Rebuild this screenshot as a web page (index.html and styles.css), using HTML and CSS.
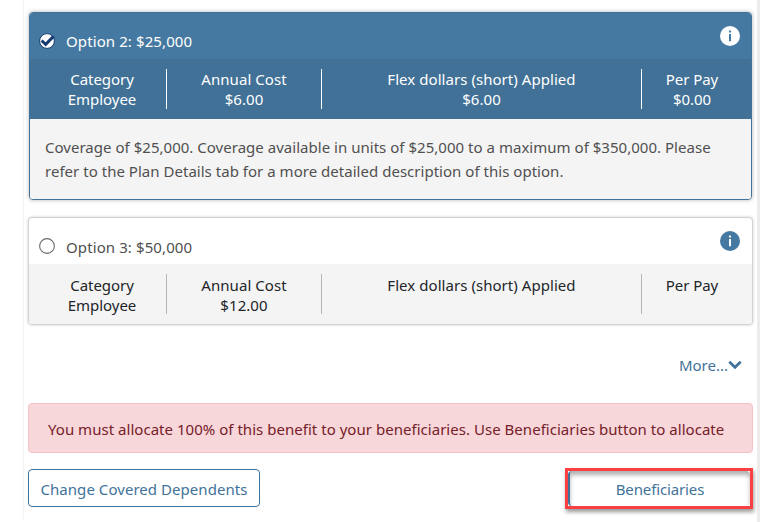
FILE: index.html
```html
<!DOCTYPE html>
<html lang="en">
<head>
<meta charset="utf-8">
<title>Benefit options</title>
<link rel="stylesheet" href="styles.css">
</head>
<body>
<main class="panel">
  <section class="card selected">
    <header class="card-head">
      <svg class="radio" viewBox="0 0 16 16"><circle cx="8" cy="8" r="7.4" fill="#fff" stroke="#173a70" stroke-width="1"/><path d="M2.6 7.5 6.7 11.4 14.6 3.2" fill="none" stroke="#173a70" stroke-width="3"/></svg>
      <span class="title">Option 2: $25,000</span>
      <svg class="info" viewBox="0 0 20 20"><circle cx="10" cy="10" r="10" fill="#fff"/><path d="M9 4.5h2v2H9zM9 8h2v7.3H9z" fill="#4679a1"/></svg>
    </header>
    <div class="costs">
      <div class="cell category"><span>Category</span><span>Employee</span></div>
      <div class="cell annual"><span>Annual Cost</span><span>$6.00</span></div>
      <div class="cell flex"><span>Flex dollars (short) Applied</span><span>$6.00</span></div>
      <div class="cell pay"><span>Per Pay</span><span>$0.00</span></div>
    </div>
    <p class="details">Coverage of $25,000. Coverage available in units of $25,000 to a maximum of $350,000. Please<br>refer to the Plan Details tab for a more detailed description of this option.</p>
  </section>

  <section class="card">
    <header class="card-head">
      <svg class="radio" viewBox="0 0 16 16"><circle cx="8" cy="8" r="7.4" fill="#fff" stroke="#666b70" stroke-width="1.1"/></svg>
      <span class="title">Option 3: $50,000</span>
      <svg class="info" viewBox="0 0 20 20"><circle cx="10" cy="10" r="10" fill="#4679a1"/><path d="M9 4.5h2v2H9zM9 8h2v7.3H9z" fill="#fff"/></svg>
    </header>
    <div class="costs">
      <div class="cell category"><span>Category</span><span>Employee</span></div>
      <div class="cell annual"><span>Annual Cost</span><span>$12.00</span></div>
      <div class="cell flex"><span>Flex dollars (short) Applied</span></div>
      <div class="cell pay"><span>Per Pay</span></div>
    </div>
  </section>

  <a class="more"><span>More...</span><svg class="chevron" viewBox="0 0 14 10"><path d="M1.3 1.8 7 7.3 12.7 1.8" fill="none" stroke="#41729a" stroke-width="2.7"/></svg></a>
  <div class="alert"><span>You must allocate 100% of this benefit to your beneficiaries. Use Beneficiaries button to allocate</span></div>
  <div class="actions">
    <button class="btn dependents">Change Covered Dependents</button>
    <div class="highlight"><button class="btn beneficiaries">Beneficiaries</button></div>
  </div>
</main>
</body>
</html>
```
FILE: styles.css
```css
* { box-sizing: border-box; }
body {
  margin: 0;
  height: 522px;
  overflow: hidden;
  background: linear-gradient(to right, #fff 757px, #ececec 757px);
  font: 15px/20px "Noto Sans", "Open Sans", sans-serif;
  color: #212529;
}
.panel {
  width: 734px;
  height: 521px;
  margin-left: 23px;
  padding: 12px 4px 0 5px;
  border-left: 1px solid #f3f3f3;
  border-radius: 0 0 4px 4px;
  background: #fff;
  display: flex;
  flex-direction: column;
}
.card {
  height: 108px;
  margin: 0 0 0 -1px;
  border: 1px solid #d2d3d4;
  border-radius: 4px;
  box-shadow: 0 0 3px rgba(0, 0, 0, .2);
  overflow: hidden;
  flex: none;
  background: #fff;
}
.card.selected {
  height: 188px;
  margin: 0 1px 17px 0;
  border-color: #41729a;
  box-shadow: 0 0 4px rgba(0, 0, 0, .3);
}
.card-head {
  height: 46px;
  display: flex;
  align-items: flex-start;
  padding: 13px 12px 0 10px;
  color: #505050;
}
.selected .card-head { background: #4679a1; color: #fff; padding: 13px 11px 0 9px; }
.radio { width: 16px; height: 16px; margin: 7px 11px 0 0; flex: none; }
.title { margin-top: 6px; letter-spacing: .1px; white-space: nowrap; }
.selected .title { margin-top: 5px; }
.info { width: 20px; height: 20px; margin-left: auto; flex: none; }
.costs {
  height: 60px;
  display: flex;
  padding: 10px 9px;
  background: #f4f4f4;
}
.selected .costs { background: #417197; color: #fff; padding: 10px 8px; }
.cell {
  height: 40px;
  display: flex;
  flex-direction: column;
  align-items: center;
  border-right: 1px solid #b4b4b4;
  white-space: nowrap;
  letter-spacing: -.05px;
  padding-top: 1px;
}
.selected .cell { border-color: #fff; padding-top: 0; }
.category { width: 129px; }
.annual { width: 155px; letter-spacing: .06px; }
.flex { width: 320px; letter-spacing: .05px; }
.pay { flex: 1; border-right: 0; padding-right: 1px; }
.details {
  height: 80px;
  margin: 0;
  padding: 16px 0 0 15px;
  background: #f4f4f4;
  color: #505050;
  line-height: 24px;
  white-space: nowrap;
  letter-spacing: .025px;
}
.more {
  height: 20px;
  margin: 30px 11px 0 0;
  display: flex;
  justify-content: flex-end;
  color: #41729a;
}
.chevron { width: 14px; height: 10px; margin-top: 5px; }
.alert {
  height: 50px;
  margin: 28px 0 0 -1px;
  padding: 15px 0 0 19px;
  border: 1px solid #f5c2c7;
  border-radius: 4px;
  background: #f7d7da;
  color: #762029;
  white-space: nowrap;
  letter-spacing: .03px;
}
.actions {
  margin: 15px 0 0 -1px;
  display: flex;
  justify-content: space-between;
}
.btn {
  height: 38px;
  padding: 2px 0 0;
  border: 1px solid #41729a;
  border-radius: 4px;
  background: #fff;
  color: #41729a;
  font: inherit;
  white-space: nowrap;
}
.dependents { width: 232px; margin-top: 1px; letter-spacing: .05px; }
.highlight {
  width: 188px;
  height: 41px;
  border: 3px solid #fa4043;
  box-shadow: 1px 3px 4px rgba(0, 0, 0, .4);
}
.beneficiaries {
  display: block;
  width: 182px;
  height: 35px;
  padding: 1px 0 0;
  border-width: 0 0 0 2px;
  letter-spacing: -.13px;
  box-shadow: inset 0 4px 4px rgba(0, 0, 0, .3);
}
```
